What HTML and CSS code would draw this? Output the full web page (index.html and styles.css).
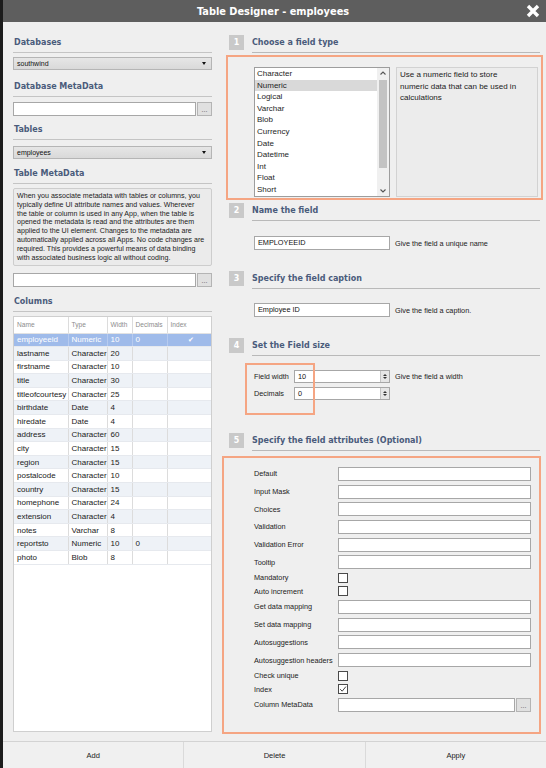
FILE: index.html
```html
<!DOCTYPE html>
<html>
<head>
<meta charset="utf-8">
<title>Table Designer - employees</title>
<link rel="stylesheet" href="styles.css">
</head>
<body>
<div class="window">
  <div class="titlebar">
    <span class="title">Table Designer - employees</span>
    <svg class="close" viewBox="0 0 14 14" width="14" height="14"><path d="M2 2 L12 12 M12 2 L2 12" stroke="#fff" stroke-width="3.4" fill="none"/></svg>
  </div>
  <div class="main">
    <div class="left">
      <div class="heading">Databases</div>
      <div class="select sel-db"><span>southwind</span><span class="arrow"></span></div>
      <div class="heading h2">Database MetaData</div>
      <div class="inputgroup ig-db"><div class="input"></div><div class="ellipsis">...</div></div>
      <div class="heading h3">Tables</div>
      <div class="select sel-tb"><span>employees</span><span class="arrow"></span></div>
      <div class="heading h4">Table MetaData</div>
      <div class="metatext">When you associate metadata with tables or columns, you<br>typically define UI attribute names and values. Wherever<br>the table or column is used in any App, when the table is<br>opened the metadata is read and the attributes are them<br>applied to the UI element. Changes to the metadata are<br>automatically applied across all Apps. No code changes are<br>required. This provides a powerful means of data binding<br>with associated business logic all without coding.</div>
      <div class="inputgroup ig-tb"><div class="input"></div><div class="ellipsis">...</div></div>
      <div class="heading h5">Columns</div>
      <div class="grid">
        <table class="cols">
          <colgroup><col class="c1"><col class="c2"><col class="c3"><col class="c4"><col class="c5"></colgroup>
          <thead><tr><th>Name</th><th>Type</th><th>Width</th><th>Decimals</th><th>Index</th></tr></thead>
          <tbody>
            <tr class="sel"><td>employeeid</td><td>Numeric</td><td>10</td><td>0</td><td class="idx">&#10004;</td></tr>
            <tr><td>lastname</td><td>Character</td><td>20</td><td></td><td></td></tr>
            <tr><td>firstname</td><td>Character</td><td>10</td><td></td><td></td></tr>
            <tr><td>title</td><td>Character</td><td>30</td><td></td><td></td></tr>
            <tr><td>titleofcourtesy</td><td>Character</td><td>25</td><td></td><td></td></tr>
            <tr><td>birthdate</td><td>Date</td><td>4</td><td></td><td></td></tr>
            <tr><td>hiredate</td><td>Date</td><td>4</td><td></td><td></td></tr>
            <tr><td>address</td><td>Character</td><td>60</td><td></td><td></td></tr>
            <tr><td>city</td><td>Character</td><td>15</td><td></td><td></td></tr>
            <tr><td>region</td><td>Character</td><td>15</td><td></td><td></td></tr>
            <tr><td>postalcode</td><td>Character</td><td>10</td><td></td><td></td></tr>
            <tr><td>country</td><td>Character</td><td>15</td><td></td><td></td></tr>
            <tr><td>homephone</td><td>Character</td><td>24</td><td></td><td></td></tr>
            <tr><td>extension</td><td>Character</td><td>4</td><td></td><td></td></tr>
            <tr><td>notes</td><td>Varchar</td><td>8</td><td></td><td></td></tr>
            <tr><td>reportsto</td><td>Numeric</td><td>10</td><td>0</td><td></td></tr>
            <tr><td>photo</td><td>Blob</td><td>8</td><td></td><td></td></tr>
          </tbody>
        </table>
      </div>
    </div>

    <div class="right">
      <div class="shead"><span class="badge">1</span><span class="stitle">Choose a field type</span></div>
      <div class="box box1">
        <div class="listbox">
          <div class="items">
            <div class="item">Character</div>
            <div class="item on">Numeric</div>
            <div class="item">Logical</div>
            <div class="item">Varchar</div>
            <div class="item">Blob</div>
            <div class="item">Currency</div>
            <div class="item">Date</div>
            <div class="item">Datetime</div>
            <div class="item">Int</div>
            <div class="item">Float</div>
            <div class="item">Short</div>
          </div>
          <div class="scrollbar">
            <svg class="sarrow" viewBox="0 0 8 6" width="8" height="6"><path d="M1.5 4.5 L4 2 L6.5 4.5" stroke="#555" stroke-width="1.1" fill="none"/></svg>
            <div class="thumb"></div>
            <svg class="sarrow" viewBox="0 0 8 6" width="8" height="6"><path d="M1.5 1.5 L4 4 L6.5 1.5" stroke="#555" stroke-width="1.1" fill="none"/></svg>
          </div>
        </div>
        <div class="desc">Use a numeric field to store numeric data that can be used in calculations</div>
      </div>

      <div class="shead s2"><span class="badge">2</span><span class="stitle">Name the field</span></div>
      <div class="frow r2"><div class="input txt">EMPLOYEEID</div><span class="hint">Give the field a unique name</span></div>

      <div class="shead s3"><span class="badge">3</span><span class="stitle">Specify the field caption</span></div>
      <div class="frow r3"><div class="input txt">Employee ID</div><span class="hint">Give the field a caption.</span></div>

      <div class="shead s4"><span class="badge">4</span><span class="stitle">Set the Field size</span></div>
      <div class="sizebox">
        <div class="srow"><span class="slabel">Field width</span><div class="spin"><span class="val">10</span><span class="spinbtn"><i class="up"></i><i class="dn"></i></span></div><span class="hint">Give the field a width</span></div>
        <div class="srow"><span class="slabel">Decimals</span><div class="spin"><span class="val">0</span><span class="spinbtn"><i class="up"></i><i class="dn"></i></span></div></div>
        <div class="hl"></div>
      </div>

      <div class="shead s5"><span class="badge">5</span><span class="stitle">Specify the field attributes (Optional)</span></div>
      <div class="box box5">
        <div class="arow"><span class="alabel">Default</span><div class="input ainput"></div></div>
        <div class="arow"><span class="alabel">Input Mask</span><div class="input ainput"></div></div>
        <div class="arow"><span class="alabel">Choices</span><div class="input ainput"></div></div>
        <div class="arow"><span class="alabel">Validation</span><div class="input ainput"></div></div>
        <div class="arow"><span class="alabel">Validation Error</span><div class="input ainput"></div></div>
        <div class="arow"><span class="alabel">Tooltip</span><div class="input ainput"></div></div>
        <div class="crow"><span class="alabel">Mandatory</span><span class="check"></span></div>
        <div class="crow"><span class="alabel">Auto increment</span><span class="check"></span></div>
        <div class="arow"><span class="alabel">Get data mapping</span><div class="input ainput"></div></div>
        <div class="arow"><span class="alabel">Set data mapping</span><div class="input ainput"></div></div>
        <div class="arow"><span class="alabel">Autosuggestions</span><div class="input ainput"></div></div>
        <div class="arow"><span class="alabel">Autosuggestion headers</span><div class="input ainput"></div></div>
        <div class="crow"><span class="alabel">Check unique</span><span class="check"></span></div>
        <div class="crow"><span class="alabel">Index</span><span class="check"><svg viewBox="0 0 8 8" width="8" height="8"><path d="M1.2 4.2 L3.2 6.2 L6.9 1.6" stroke="#444" stroke-width="1" fill="none"/></svg></span></div>
        <div class="arow"><span class="alabel">Column MetaData</span><div class="agroup"><div class="input"></div><div class="ellipsis">...</div></div></div>
      </div>
    </div>
  </div>
  <div class="footer">
    <div class="btn">Add</div>
    <div class="btn">Delete</div>
    <div class="btn">Apply</div>
  </div>
</div>
</body>
</html>
```

FILE: styles.css
```css
* { box-sizing: border-box; }
html, body { margin: 0; padding: 0; }
body {
  width: 546px;
  height: 768px;
  overflow: hidden;
  background: #efefef;
  font-family: "Liberation Sans", Arial, sans-serif;
  color: #1e1e1e;
}
.window {
  width: 546px;
  height: 768px;
  border-left: 3px solid #1c1c1c;
  display: flex;
  flex-direction: column;
  background: #efefef;
}
.titlebar {
  height: 22px;
  flex: none;
  background: #5e5e5e;
  position: relative;
  display: flex;
  align-items: center;
  justify-content: center;
}
.title {
  color: #fff;
  font-family: "DejaVu Sans", sans-serif;
  font-weight: bold;
  font-size: 9.8px;
  margin-left: -3px;
}
.close {
  position: absolute;
  right: 6px;
  top: 4px;
}
.main {
  height: 719px;
  flex: none;
  display: flex;
}
.left {
  width: 209px;
  padding: 11px 0 0 10px;
  display: flex;
  flex-direction: column;
}
.heading {
  height: 20px;
  line-height: 19px;
  font-family: "DejaVu Sans", sans-serif;
  font-weight: bold;
  font-size: 8px;
  color: #4a5b7b;
  border-bottom: 1px solid #c4c4c4;
  padding-left: 1px;
}
.h2 { margin-top: 7px; }
.h3 { margin-top: 4px; }
.h4 { margin-top: 5px; }
.h5 { margin-top: 5px; }
.select {
  height: 13px;
  border: 1px solid #b5b5b5;
  background: linear-gradient(#e6e6e6, #d9d9d9);
  display: flex;
  align-items: center;
  justify-content: space-between;
  padding: 0 5px 0 3px;
  font-size: 7px;
  color: #111;
}
.sel-db { margin-top: 4px; }
.sel-tb { margin-top: 6px; }
.arrow {
  width: 0;
  height: 0;
  border-left: 2.5px solid transparent;
  border-right: 2.5px solid transparent;
  border-top: 3px solid #111;
}
.inputgroup {
  height: 14px;
  display: flex;
}
.ig-db { margin-top: 5px; }
.ig-tb { margin-top: 7px; }
.input {
  background: #fff;
  border: 1px solid #a7a7a7;
  height: 14px;
}
.inputgroup .input { flex: 1; }
.ellipsis {
  width: 15px;
  height: 14px;
  margin-left: 1px;
  background: #e0e0e0;
  border: 1px solid #b4b4b4;
  font-size: 7px;
  color: #555;
  text-align: center;
  line-height: 14px;
}
.metatext {
  margin-top: 4px;
  height: 78px;
  background: #ebebeb;
  border: 1px solid #cdcdcd;
  border-radius: 2px;
  padding: 3px 2px 2px 3px;
  font-size: 7.1px;
  line-height: 8.8px;
  color: #222;
  white-space: nowrap;
  overflow: hidden;
}
.grid {
  margin-top: 4px;
  height: 416px;
  background: #fff;
  border: 1px solid #cfcfcf;
}
.cols {
  width: 197px;
  border-collapse: collapse;
  table-layout: fixed;
}
.c1 { width: 54px; }
.c2 { width: 39px; }
.c3 { width: 25px; }
.c4 { width: 35px; }
.c5 { width: 44px; }
.cols th {
  height: 16px;
  font-weight: normal;
  font-size: 6.6px;
  color: #8c8c8c;
  text-align: left;
  padding: 0 0 0 3px;
  border-right: 1px solid #dcdcdc;
  border-bottom: 1px solid #e2e2e2;
}
.cols td {
  height: 13.6px;
  padding: 0 0 0 3px;
  font-size: 8px;
  color: #222;
  white-space: nowrap;
  overflow: hidden;
  border-right: 1px solid #dcdcdc;
  border-bottom: 1px solid #e6e9ee;
}
.cols th:last-child, .cols td:last-child { border-right: none; }
.cols tbody tr:nth-child(even) td { background: #eef2f7; }
.cols tr.sel td {
  background: #9fbbea;
  color: #fff;
  border-right-color: #b7cbef;
}
.cols td.idx { text-align: center; font-size: 7px; }

.right {
  width: 321px;
  margin-left: 10px;
  padding-top: 11px;
  display: flex;
  flex-direction: column;
}
.shead {
  height: 20px;
  display: flex;
  align-items: flex-start;
  padding-left: 7px;
}
.badge {
  width: 15px;
  height: 15px;
  margin-top: 2px;
  background: #c9c9c9;
  color: #fff;
  font-family: "DejaVu Sans", sans-serif;
  font-weight: bold;
  font-size: 8px;
  line-height: 15px;
  text-align: center;
}
.stitle {
  flex: 1;
  margin-left: 8px;
  margin-right: 3px;
  height: 20px;
  line-height: 19px;
  font-family: "DejaVu Sans", sans-serif;
  font-weight: bold;
  font-size: 8px;
  color: #4a5b7b;
  border-bottom: 1px solid #b9b9b9;
}
.s2 { margin-top: 1px; }
.s3 { margin-top: 19px; }
.s4 { margin-top: 19px; }
.s5 { margin-top: 16px; }
.box {
  border: 2px solid #f5a583;
}
.box1 {
  margin-top: 2px;
  margin-left: 4px;
  width: 317px;
  height: 145px;
  padding: 10px 3px 0 26px;
  display: flex;
  gap: 6px;
}
.listbox {
  width: 136px;
  height: 130px;
  background: #fff;
  border: 1px solid #9d9d9d;
  display: flex;
}
.items { flex: 1; }
.item {
  height: 11.6px;
  line-height: 11.6px;
  font-size: 8px;
  padding-left: 2px;
  color: #1e1e1e;
}
.item.on { background: #d9d9d9; }
.scrollbar {
  width: 12px;
  background: #f0f0f0;
  display: flex;
  flex-direction: column;
  align-items: center;
  justify-content: space-between;
  padding: 2px 0 2px;
}
.thumb {
  width: 8px;
  flex: 1;
  margin: 4px 0 20px;
  background: #c3c3c3;
}
.desc {
  width: 142px;
  height: 130px;
  background: #ececec;
  border: 1px solid #d2d2d2;
  padding: 1px 14px 1px 3px;
  font-size: 8px;
  line-height: 11.5px;
  color: #222;
}
.frow {
  display: flex;
  align-items: center;
  padding-left: 32px;
  height: 14px;
}
.r2 { margin-top: 15px; }
.r3 { margin-top: 14px; }
.txt {
  width: 136px;
  font-size: 7.3px;
  line-height: 12px;
  padding-left: 3px;
  color: #111;
}
.hint {
  margin-left: 5px;
  font-size: 7.3px;
  color: #222;
}
.sizebox {
  margin-top: 7px;
  height: 52px;
  position: relative;
  padding: 7px 0 0 32px;
}
.srow {
  display: flex;
  align-items: center;
  height: 13px;
  margin-bottom: 4px;
}
.slabel {
  width: 40px;
  font-size: 7.3px;
  color: #222;
}
.spin {
  width: 96px;
  height: 13px;
  background: #fff;
  border: 1px solid #a7a7a7;
  display: flex;
  justify-content: space-between;
}
.val {
  font-size: 7.3px;
  line-height: 11px;
  padding-left: 3px;
  color: #111;
}
.spinbtn {
  width: 9px;
  background: #e6e6e6;
  border-left: 1px solid #c4c4c4;
  display: flex;
  flex-direction: column;
  align-items: center;
  justify-content: center;
  gap: 1px;
}
.spinbtn i {
  width: 0;
  height: 0;
  border-left: 2px solid transparent;
  border-right: 2px solid transparent;
}
.spinbtn .up { border-bottom: 2.5px solid #333; }
.spinbtn .dn { border-top: 2.5px solid #333; }
.hl {
  position: absolute;
  left: 23px;
  top: 0;
  width: 70px;
  height: 52px;
  border: 2px solid #f5a583;
}
.box5 {
  margin-top: 5px;
  width: 319px;
  height: 278px;
  padding: 7px 0 0 30px;
}
.arow {
  height: 17.7px;
  display: flex;
  align-items: center;
}
.crow {
  height: 13.5px;
  display: flex;
  align-items: center;
}
.alabel {
  width: 84px;
  font-size: 7.3px;
  color: #222;
  white-space: nowrap;
}
.ainput { width: 193px; }
.agroup {
  width: 193px;
  display: flex;
}
.agroup .input { flex: 1; }
.check {
  width: 10px;
  height: 10px;
  background: #fff;
  border: 1px solid #4a4a4a;
  display: flex;
  align-items: center;
  justify-content: center;
}
.footer {
  flex: 1;
  border-top: 1px solid #d3d3d3;
  display: flex;
  background: #f0f0f0;
}
.btn {
  flex: 1;
  display: flex;
  align-items: center;
  justify-content: center;
  font-size: 7.5px;
  color: #222;
  border-right: 1px solid #dadada;
}
.btn:last-child { border-right: none; }
```
